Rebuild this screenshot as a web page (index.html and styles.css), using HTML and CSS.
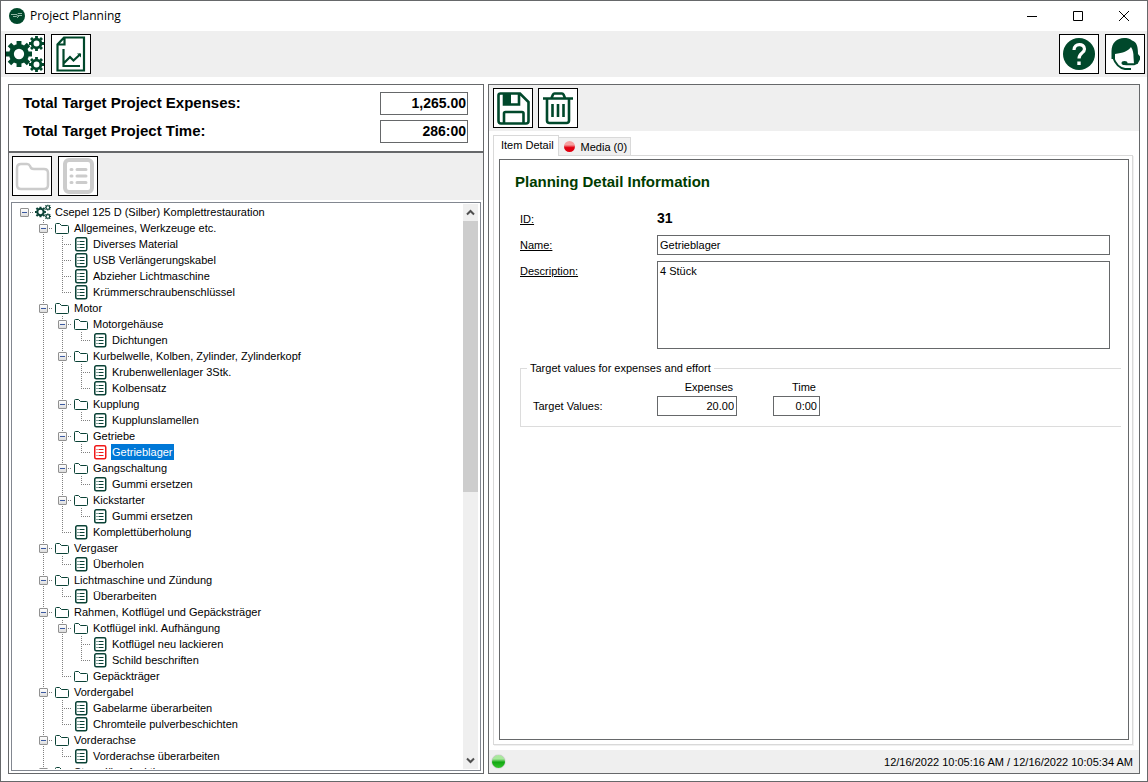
FILE: index.html
```html
<!DOCTYPE html>
<html lang="en">
<head>
    <meta charset="UTF-8">
    <meta name="viewport" content="width=device-width, initial-scale=1.0">
    <title>Project Planning</title>
    <link rel="stylesheet" href="styles.css">
</head>
<body>

    <!-- Shared icons -->
    <svg class="icon-defs" aria-hidden="true">
        <symbol id="gear" viewBox="-12 -12 24 24">
            <circle r="7" fill="none" stroke="currentColor" stroke-width="4.500"/>
            <path d="M0-8v-4M0 8v4M-8 0h-4M8 0h4M-6-6l-2.800-2.800M6-6l2.800-2.800M-6 6l-2.800 2.800M6 6l2.800 2.800" stroke="currentColor" stroke-width="4.500"/>
        </symbol>
        <symbol id="gears" viewBox="0 0 38 38">
            <use href="#gear" x="0" y="6" width="26" height="26"/>
            <use href="#gear" x="23" y="1" width="15" height="15"/>
            <use href="#gear" x="23" y="22" width="15" height="15"/>
        </symbol>
        <symbol id="folder" viewBox="0 0 16 16">
            <path d="M1.500 12.500V4.500Q1.500 3.500 2.500 3.500H5.500L7.500 5.500H13.500Q14.500 5.500 14.500 6.500V12.500Q14.500 13.500 13.500 13.500H2.500Q1.500 13.500 1.500 12.500Z" fill="#fff" stroke="currentColor"/>
        </symbol>
        <symbol id="item" viewBox="0 0 16 16">
            <rect x="2.750" y="1.750" width="11" height="13" rx="1.500" fill="#fff" stroke="currentColor" stroke-width="1.500"/>
            <path d="M4.500 5.500h1M4.500 8.500h1M4.500 11.500h1M6.500 5.500h5M6.500 8.500h5M6.500 11.500h5" stroke="currentColor"/>
        </symbol>
    </svg>

    <div class="window">
        <header class="titlebar">
            <svg class="app-icon" viewBox="0 0 16 16" aria-hidden="true">
                <circle cx="8" cy="8" r="8" fill="#00482b"/>
                <path d="M2 6.500h6l1-1h4M4 8.500h3l2-1h4M10 8l-2 2" stroke="#8fb5a3" fill="none"/>
            </svg>
            <h1>Project Planning</h1>
            <div class="window-buttons">
                <button type="button" aria-label="Minimize"><svg width="12" height="12" viewBox="0 0 12 12"><path d="M1 6.500h10"/></svg></button>
                <button type="button" aria-label="Maximize"><svg width="12" height="12" viewBox="0 0 12 12"><path d="M1.500 1.500h9v9h-9z"/></svg></button>
                <button type="button" aria-label="Close"><svg width="12" height="12" viewBox="0 0 12 12"><path d="M1 1l10 10M11 1L1 11"/></svg></button>
            </div>
        </header>

        <!-- Main toolbar -->
        <nav class="toolbar main-toolbar">
            <button type="button" class="tool" aria-label="Settings"><svg viewBox="0 0 38 38"><use href="#gears"/></svg></button>
            <button type="button" class="tool" aria-label="Report">
                <svg viewBox="0 0 38 38">
                    <path d="M12 2.500H32V35.500H5.500V9.500zM12.500 3v6.500H6M11.500 14v17H28M12 28l6-6 3.500 3.500 7-6.500" fill="none" stroke="currentColor" stroke-width="2.200"/>
                    <path d="M29 18.500v4l-4-4z"/>
                </svg>
            </button>
            <button type="button" class="tool push" aria-label="Help">
                <svg viewBox="0 0 38 38">
                    <circle cx="19" cy="19" r="16"/>
                    <path d="M14 15c0-7 10.500-7 10.500-1 0 4-5.500 4-5.500 9.500" fill="none" stroke="#fff" stroke-width="3.200"/>
                    <path d="M17.300 26.500h3.400v3.500h-3.400z" fill="#fff"/>
                </svg>
            </button>
            <button type="button" class="tool" aria-label="Support">
                <svg viewBox="0 0 38 38">
                    <path d="M5.500 24V16C5.500 8 11 3 18 3C21 3 24 3.500 26 5.500C31 7 32 12 32 19L34 21.500V24.500L31.500 29H28L27.500 22C27.500 18 27 15 25 12C22 16 17 18 9 19V24z"/>
                    <path d="M7 22C9 28 13 33 19 34H25M31 27C30 30 27 29.500 18 29" fill="none" stroke="currentColor" stroke-width="2"/>
                    <ellipse cx="18.500" cy="28" rx="3" ry="2"/>
                </svg>
            </button>
        </nav>

        <main class="workspace">
            <section class="panel project">
                <div class="totals">
                    <label for="totalExpenses">Total Target Project Expenses:</label>
                    <input type="text" id="totalExpenses" value="1,265.00" readonly>
                    <label for="totalTime">Total Target Project Time:</label>
                    <input type="text" id="totalTime" value="286:00" readonly>
                </div>
                <div class="toolbar tree-toolbar">
                    <button type="button" class="tool" aria-label="New folder" disabled>
                        <svg viewBox="0 0 38 38"><path d="M4 28V11Q4 7 8 7H14Q16 7 17 9L18 11Q19 12 21 12H31Q35 12 35 16V28Q35 32 31 32H8Q4 32 4 28Z" fill="none" stroke="currentColor" stroke-width="2.500"/></svg>
                    </button>
                    <button type="button" class="tool" aria-label="New item" disabled>
                        <svg viewBox="0 0 38 38">
                            <rect x="6" y="3" width="27" height="32" rx="4" fill="none" stroke="currentColor" stroke-width="4"/>
                            <path d="M12 12.500h1M12 19h1M12 25.500h1M18 12.500h9M18 19h9M18 25.500h9" stroke="currentColor" stroke-width="3" stroke-linecap="round"/>
                        </svg>
                    </button>
                </div>
                <div class="tree-box">
                    <div class="tree-view"><ul class="tree" id="projectTree"></ul></div>
                    <div class="scrollbar" aria-hidden="true">
                        <svg width="15" height="17" viewBox="0 0 15 17"><path d="M4 10.500l3.500-3.500 3.500 3.500"/></svg>
                        <div class="scroll-track"><div class="thumb"></div></div>
                        <svg width="15" height="17" viewBox="0 0 15 17"><path d="M4 6.500l3.500 3.500 3.500-3.500"/></svg>
                    </div>
                </div>
            </section>

            <section class="panel detail">
                <div class="toolbar detail-toolbar">
                    <button type="button" class="tool" aria-label="Save">
                        <svg viewBox="0 0 38 38">
                            <path d="M4.500 6.500Q4.500 4.500 6.500 4.500H26L34.500 13V32Q34.500 34.500 32 34.500H7Q4.500 34.500 4.500 32zM10 34V24.500Q10 23 11.500 23H28Q29.500 23 29.500 24.500V34M10 5v10.500H25V5" fill="none" stroke="currentColor" stroke-width="2.600"/>
                            <path d="M10 5h7v10h-7z"/>
                        </svg>
                    </button>
                    <button type="button" class="tool" aria-label="Delete">
                        <svg viewBox="0 0 38 38">
                            <path d="M4 9.500H34M12.500 9L14 5.500Q14.500 4.500 15.500 4.500H23Q24 4.500 24.500 5.500L26 9M8 10V31.500Q8 34 10.500 34H27.500Q30 34 30 31.500V10M13.500 15v13M19 15v13M24.500 15v13" fill="none" stroke="currentColor" stroke-width="2.600"/>
                        </svg>
                    </button>
                </div>
                <div class="tabs" role="tablist">
                    <button type="button" class="tab active" role="tab" aria-selected="true">Item Detail</button>
                    <button type="button" class="tab" role="tab" aria-selected="false"><span class="dot red"></span>Media (0)</button>
                </div>
                <div class="tab-page" role="tabpanel">
                    <form class="detail-form">
                        <h2>Planning Detail Information</h2>
                        <div class="fields">
                            <label for="itemId">ID:</label>
                            <output id="itemId">31</output>
                            <label for="itemName">Name:</label>
                            <input type="text" id="itemName" value="Getrieblager">
                            <label for="itemDescription">Description:</label>
                            <textarea id="itemDescription">4 Stück</textarea>
                        </div>
                        <fieldset>
                            <legend>Target values for expenses and effort</legend>
                            <div class="targets">
                                <label for="targetExpenses" class="expenses-head">Expenses</label>
                                <label for="targetTime" class="time-head">Time</label>
                                <span class="targets-label">Target Values:</span>
                                <input type="text" id="targetExpenses" value="20.00">
                                <input type="text" id="targetTime" class="time-value" value="0:00">
                            </div>
                        </fieldset>
                    </form>
                </div>
                <footer class="statusbar">
                    <span class="dot green"></span>
                    <span>12/16/2022 10:05:16 AM / 12/16/2022 10:05:34 AM</span>
                </footer>
            </section>
        </main>
    </div>

    <script src="script.js"></script>
</body>
</html>
```

FILE: styles.css
```css
* {
    box-sizing: border-box;
}

body {
    margin: 0;
    height: 100vh;
    overflow: hidden;
    font-family: "Liberation Sans", Arial, sans-serif;
    font-size: 11px;
    line-height: 16px;
    color: #000;
    background: #fff;
}

button, input, textarea {
    font: inherit;
    color: inherit;
}

button {
    padding: 0;
}

.icon-defs {
    position: absolute;
    width: 0;
    height: 0;
}

.window {
    display: flex;
    flex-direction: column;
    height: 100%;
    border: 1px solid #66686a;
}

/* Title bar */
.titlebar {
    display: flex;
    align-items: center;
    height: 30px;
    flex: none;
    padding-left: 8px;
}

.app-icon {
    width: 16px;
    height: 16px;
}

.titlebar h1 {
    margin: 0 0 0 5px;
    font-family: "Open Sans", "Noto Sans", sans-serif;
    font-size: 12px;
    font-weight: normal;
}

.window-buttons {
    display: flex;
    margin-left: auto;
}

.window-buttons button {
    display: grid;
    place-items: center;
    width: 46px;
    height: 29px;
    border: none;
    background: none;
}

.window-buttons path {
    fill: none;
    stroke: #000;
}

/* Toolbars */
.toolbar {
    display: flex;
    flex: none;
    background: #efefef;
}

.tool {
    width: 40px;
    height: 40px;
    border: 1px solid #000;
    background: #fff;
    color: #00482b;
    fill: currentColor;
}

.tool svg {
    display: block;
    width: 38px;
    height: 38px;
}

.tool:disabled {
    color: #ccc;
}

.push {
    margin-left: auto;
}

.main-toolbar {
    gap: 6px;
    height: 46px;
    padding: 3px 2px 0 4px;
}

.tree-toolbar {
    gap: 6px;
    height: 47px;
    padding: 3px 3px 0;
}

.detail-toolbar {
    gap: 5px;
    height: 46px;
    padding: 3px 4px 0;
}

/* Panels */
.workspace {
    display: grid;
    grid-template-columns: 476px minmax(0, 1fr);
    gap: 4px;
    flex: 1;
    min-height: 0;
    padding: 7px;
}

.panel {
    display: flex;
    flex-direction: column;
    min-height: 0;
    border: 1px solid #66686a;
}

.totals {
    display: grid;
    grid-template-columns: 1fr 88px;
    row-gap: 5px;
    padding: 7px 15px 8px 14px;
    border-bottom: 2px solid #66686a;
    font-size: 15px;
    font-weight: bold;
}

.totals label {
    line-height: 22px;
}

.totals input {
    width: 88px;
    height: 23px;
    padding: 0 1px 2px;
    border: 1px solid #66686a;
    font-size: 14px;
    text-align: right;
}

/* Project tree */
.tree-box {
    display: flex;
    flex: 1;
    min-height: 0;
    margin: 2px;
    padding: 1px;
    border: 1px solid #828790;
}

.tree-view {
    flex: 1;
    overflow: hidden;
}

.tree, .tree ul {
    margin: 0;
    padding: 0;
    list-style: none;
}

.tree {
    padding-left: 2px;
}

.tree ul {
    margin-left: 19px;
}

.tree ul > li {
    background: repeating-linear-gradient(#808080 0 1px, transparent 1px 2px) 9px 0 / 1px 100% no-repeat;
}

.tree ul > li:last-child {
    background-size: 1px 8px;
}

.row {
    display: flex;
    align-items: center;
    height: 16px;
    white-space: nowrap;
    background: repeating-linear-gradient(90deg, #808080 0 1px, transparent 1px 2px) 9px 8px / 10px 1px no-repeat;
}

.toggle {
    width: 9px;
    height: 9px;
    margin: 0 6px 0 5px;
    border: 1px solid #919191;
    border-radius: 1px;
    background: linear-gradient(#3c5aa0, #3c5aa0) center / 5px 1px no-repeat, linear-gradient(#fff, #ddd);
}

.toggle.closed {
    background: linear-gradient(#3c5aa0, #3c5aa0) center / 5px 1px no-repeat, linear-gradient(#3c5aa0, #3c5aa0) center / 1px 5px no-repeat, linear-gradient(#fff, #ddd);
}

.no-toggle {
    width: 20px;
}

.node-icon {
    width: 16px;
    height: 16px;
    color: #0a4236;
    fill: currentColor;
}

.node-name {
    margin-left: 3px;
    padding: 0 1px;
}

.selected .node-icon {
    color: #f01818;
}

.selected .node-name {
    background: #0078d7;
    color: #fff;
}

/* Scrollbar */
.scrollbar {
    display: flex;
    flex-direction: column;
    width: 16px;
    border-right: 1px solid #fff;
    background: #efefef;
}

.scrollbar path {
    fill: none;
    stroke: #505050;
    stroke-width: 2;
}

.scroll-track {
    flex: 1;
}

.thumb {
    height: 51%;
    background: #cdcdcd;
}

/* Tabs */
.tabs {
    display: flex;
    align-items: flex-end;
    height: 24px;
    padding: 4px 4px 0;
}

.tab {
    display: flex;
    align-items: center;
    height: 18px;
    padding: 0 3px;
    border: 1px solid #d9d9d9;
    border-bottom: none;
    border-left: none;
    background: #f0f0f0;
}

.tab.active {
    height: 21px;
    margin-bottom: -1px;
    padding: 0 4px 2px 7px;
    border-left: 1px solid #d9d9d9;
    background: #fff;
    z-index: 1;
}

.dot {
    flex: none;
    border-radius: 50%;
}

.red {
    width: 11px;
    height: 11px;
    margin: 0 6px 0 2px;
    background: linear-gradient(#f7a0a0 35%, #e00010 60%);
}

.green {
    width: 13px;
    height: 13px;
    background: linear-gradient(#a8e89c 30%, #12a812 55%, #35c52d);
    box-shadow: 0 0 1px #555;
}

.tab-page {
    display: flex;
    flex: 1;
    min-height: 0;
    margin: 0 6px 5px 4px;
    padding: 3px 3px 4px 5px;
    border: 1px solid #d9d9d9;
    box-shadow: 1px 1px #f0f0f0;
}

/* Detail form */
.detail-form {
    flex: 1;
    border: 1px solid #66686a;
    padding: 13px 0 0 15px;
}

.detail-form h2 {
    margin: 0 0 18px;
    font-size: 15px;
    line-height: 18px;
    color: #003c00;
}

.detail-form input, .detail-form textarea {
    display: block;
    width: 100%;
    height: 20px;
    padding: 0 2px;
    border: 1px solid #66686a;
    border-radius: 0;
    background: #fff;
}

.fields {
    display: grid;
    grid-template-columns: 137px 1fr;
    row-gap: 6px;
    margin: 0 18px 0 5px;
}

.fields label {
    line-height: 20px;
    text-decoration: underline;
}

.fields output {
    font-size: 14px;
    font-weight: bold;
    line-height: 18px;
}

.detail-form textarea {
    height: 88px;
    padding: 1px 2px;
    resize: none;
}

fieldset {
    margin: 11px 7px 0 5px;
    padding: 3px 0 10px 12px;
    border: 1px solid #dcdcdc;
    border-right: none;
}

legend {
    margin-left: -6px;
    padding: 0 3px;
}

.targets {
    display: grid;
    grid-template-columns: 124px 80px 83px;
    row-gap: 1px;
}

.expenses-head {
    grid-column: 2;
}

.expenses-head, .time-head {
    padding-right: 4px;
    text-align: right;
}

.targets-label {
    line-height: 20px;
}

.targets input {
    text-align: right;
}

.targets .time-value {
    width: 47px;
    justify-self: end;
}

/* Status bar */
.statusbar {
    display: flex;
    flex: none;
    align-items: center;
    justify-content: space-between;
    height: 23px;
    padding: 0 6px 0 3px;
    background: #efefef;
}
```

FILE: script.js
```js
// Nodes with children are folders, plain strings are items
const project = {
    name: 'Csepel 125 D (Silber) Komplettrestauration',
    icon: 'gears',
    children: [
        { name: 'Allgemeines, Werkzeuge etc.', children: ['Diverses Material', 'USB Verlängerungskabel', 'Abzieher Lichtmaschine', 'Krümmerschraubenschlüssel'] },
        { name: 'Motor', children: [
            { name: 'Motorgehäuse', children: ['Dichtungen'] },
            { name: 'Kurbelwelle, Kolben, Zylinder, Zylinderkopf', children: ['Krubenwellenlager 3Stk.', 'Kolbensatz'] },
            { name: 'Kupplung', children: ['Kupplunslamellen'] },
            { name: 'Getriebe', children: ['Getrieblager'] },
            { name: 'Gangschaltung', children: ['Gummi ersetzen'] },
            { name: 'Kickstarter', children: ['Gummi ersetzen'] },
            'Komplettüberholung'
        ] },
        { name: 'Vergaser', children: ['Überholen'] },
        { name: 'Lichtmaschine und Zündung', children: ['Überarbeiten'] },
        { name: 'Rahmen, Kotflügel und Gepäcksträger', children: [
            { name: 'Kotflügel inkl. Aufhängung', children: ['Kotflügel neu lackieren', 'Schild beschriften'] },
            { name: 'Gepäckträger', children: [] }
        ] },
        { name: 'Vordergabel', children: ['Gabelarme überarbeiten', 'Chromteile pulverbeschichten'] },
        { name: 'Vorderachse', children: ['Vorderachse überarbeiten'] },
        { name: 'Stossdämpfunktion', children: ['Überarbeiten'] }
    ]
};

const selectedItem = 'Getrieblager';

function createNode(node) {
    const isItem = typeof node === 'string';
    const name = isItem ? node : node.name;
    const icon = isItem ? 'item' : (node.icon || 'folder');
    const hasChildren = !isItem && node.children.length > 0;

    const li = document.createElement('li');
    li.innerHTML = `
        <div class="row ${name === selectedItem ? 'selected' : ''}">
            ${hasChildren ? '<button type="button" class="toggle" aria-label="Toggle"></button>' : '<span class="no-toggle"></span>'}
            <svg class="node-icon" aria-hidden="true"><use href="#${icon}"/></svg>
            <span class="node-name">${name}</span>
        </div>
    `;

    if (hasChildren) {
        const ul = document.createElement('ul');
        node.children.forEach(child => ul.appendChild(createNode(child)));
        li.appendChild(ul);

        const toggle = li.querySelector('.toggle');
        toggle.addEventListener('click', () => {
            ul.hidden = !ul.hidden;
            toggle.classList.toggle('closed', ul.hidden);
        });
    }
    return li;
}

document.getElementById('projectTree').appendChild(createNode(project));
```
